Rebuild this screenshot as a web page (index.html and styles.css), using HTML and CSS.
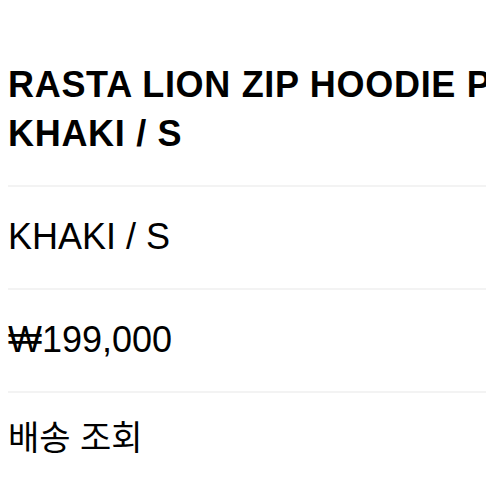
FILE: index.html
```html
<!DOCTYPE html>
<html lang="ko">
<head>
<meta charset="utf-8">
<link rel="stylesheet" href="styles.css">
</head>
<body>
<ul class="info">
  <li class="row title">
    <span class="line">RASTA LION ZIP HOODIE PANTS</span>
    <span class="line">KHAKI / S</span>
  </li>
  <li class="row">KHAKI / S</li>
  <li class="row">₩199,000</li>
  <li class="row ko">배송 조회</li>
</ul>
</body>
</html>
```
FILE: styles.css
```css
html, body {
  margin: 0;
  padding: 0;
  background: #fff;
  overflow: hidden;
}
body {
  font-family: "Liberation Sans", Arial, "Noto Sans CJK KR", sans-serif;
  color: #000;
  padding: 35px 0 0 8px;
}
.info {
  list-style: none;
  margin: 0;
  padding: 0;
}
.row {
  font-size: 36px;
  line-height: 49px;
  padding: 25px 0 27px;
  border-bottom: 2px solid #f3f3f3;
  white-space: nowrap;
}
.title {
  font-weight: bold;
  letter-spacing: 0.7px;
}
.line {
  display: block;
  overflow: hidden;
  white-space: nowrap;
}
.ko {
  font-family: "Noto Sans CJK KR", sans-serif;
  font-size: 34px;
  line-height: 49px;
  padding-top: 18px;
  border-bottom: none;
}
```
